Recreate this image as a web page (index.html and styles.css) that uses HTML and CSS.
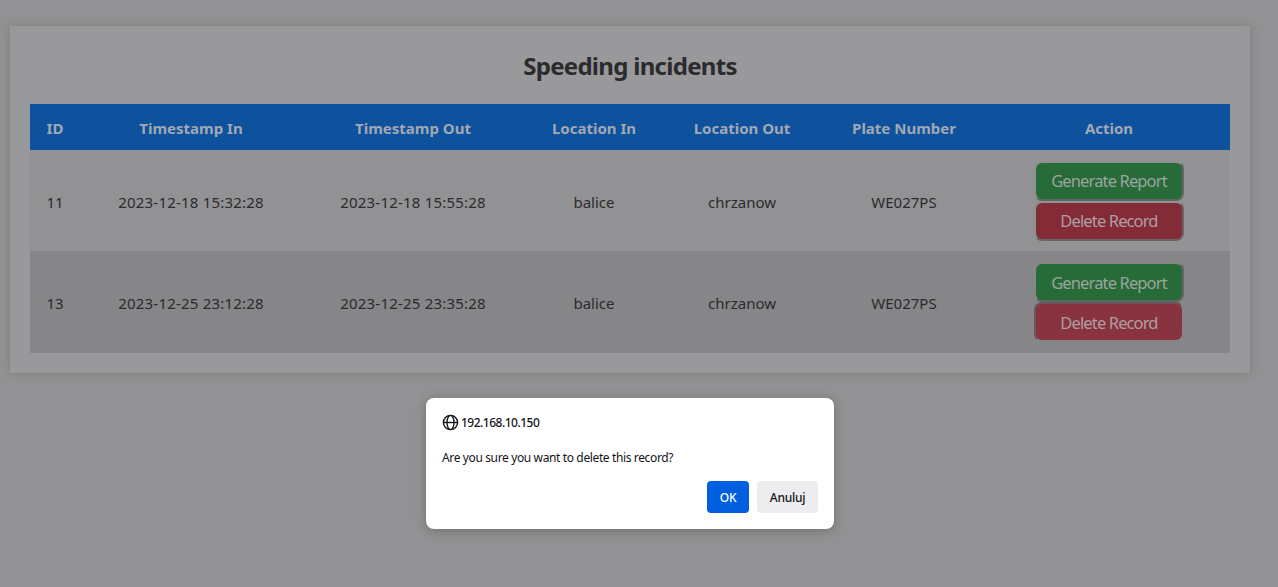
FILE: index.html
```html
<!DOCTYPE html>
<html lang="en">
<head>
<meta charset="utf-8">
<title>Speeding incidents</title>
<link rel="stylesheet" href="styles.css">
</head>
<body>
<main class="card">
  <h2 class="title">Speeding incidents</h2>
  <table class="incidents">
    <colgroup><col class="c-id"><col class="c-time"><col class="c-time"><col class="c-in"><col class="c-out"><col class="c-plate"><col></colgroup>
    <thead>
      <tr><th>ID</th><th>Timestamp In</th><th>Timestamp Out</th><th>Location In</th><th>Location Out</th><th>Plate Number</th><th>Action</th></tr>
    </thead>
    <tbody>
      <tr>
        <td>11</td><td class="time">2023-12-18 15:32:28</td><td class="time">2023-12-18 15:55:28</td><td>balice</td><td>chrzanow</td><td>WE027PS</td>
        <td><div class="actions"><button class="btn report">Generate Report</button><button class="btn delete">Delete Record</button></div></td>
      </tr>
      <tr>
        <td>13</td><td class="time">2023-12-25 23:12:28</td><td class="time">2023-12-25 23:35:28</td><td>balice</td><td>chrzanow</td><td>WE027PS</td>
        <td><div class="actions"><button class="btn report">Generate Report</button><button class="btn delete pressed">Delete Record</button></div></td>
      </tr>
    </tbody>
  </table>
</main>
<div class="dialog" role="dialog">
  <div class="origin">
    <svg class="globe" viewBox="0 0 16 16" fill="none" stroke="#15141a" stroke-width="1.3"><circle cx="8" cy="8" r="6.7"/><ellipse cx="8" cy="8" rx="3.3" ry="6.7"/><path d="M1.3 8h13.4"/></svg>
    <span class="host">192.168.10.150</span>
  </div>
  <p class="message">Are you sure you want to delete this record?</p>
  <div class="choices"><button class="choice ok">OK</button><button class="choice cancel">Anuluj</button></div>
</div>
</body>
</html>
```
FILE: styles.css
```css
* { box-sizing: border-box; }
body {
  margin: 0;
  height: 587px;
  padding: 26px 28px 0 10px;
  overflow: hidden;
  background: #929294;
  color: #2b2b2d;
  font-family: "Noto Sans", "Open Sans", sans-serif;
}
.card {
  height: 347px;
  padding: 20px;
  background: #99999b;
  box-shadow: 0 0 10px rgba(0, 0, 0, .14);
}
.title {
  height: 58px;
  margin: 0;
  font-size: 24px;
  line-height: 40px;
  letter-spacing: -.7px;
  text-align: center;
}
.incidents {
  width: 1200px;
  table-layout: fixed;
  border-collapse: collapse;
  font-size: 15px;
  text-align: center;
}
.c-id { width: 50px; }
.c-time { width: 222px; }
.c-in { width: 140px; }
.c-out { width: 156px; }
.c-plate { width: 168px; }
th {
  height: 46px;
  padding: 1px 0 0;
  background: #0e519d;
  color: #a1a8b2;
  white-space: nowrap;
}
td { height: 101px; padding: 2px 0 0; }
.time { letter-spacing: .2px; }
tbody tr { background: #929294; }
tbody tr:nth-child(2) { background: #868688; }
tbody tr:nth-child(2) td { height: 102px; }
tbody tr:nth-child(2) td:last-child { padding: 0; }
tbody td:last-child { padding: 0; }
.actions {
  display: flex;
  flex-direction: column;
  align-items: center;
}
.btn {
  width: 150px;
  height: 40px;
  padding: 0;
  border: 2px solid;
  border-radius: 8px;
  font: 16.5px "Noto Sans", sans-serif;
  letter-spacing: -.87px;
  color: #9ba49e;
}
.report { background: #266b38; border-color: #8f9091 #626664 #626664 #8f9091; }
.delete { background: #842b38; border-color: #8f9091 #6c6264 #6c6264 #8f9091; color: #b09da1; }
tbody tr:nth-child(2) .report { border-top-color: #868688; border-left-color: #868688; }
tbody tr:nth-child(2) .pressed { background: #88333f; border-color: #67575b #868688 #868688 #67575b; }
.dialog {
  position: absolute;
  left: 426px;
  top: 398px;
  width: 408px;
  height: 131px;
  padding: 16px;
  border-radius: 8px;
  background: #fff;
  box-shadow: 0 2px 12px rgba(0, 0, 0, .23);
  color: #15141a;
  font-size: 12px;
}
.origin { display: flex; align-items: center; gap: 2px; height: 17px; }
.globe { width: 17px; height: 17px; }
.host { letter-spacing: -.5px; font-weight: 500; }
.message { height: 50px; margin: 0; padding-top: 18px; line-height: 17px; letter-spacing: -.37px; }
.choices { display: flex; justify-content: flex-end; gap: 8px; }
.choice {
  height: 32px;
  padding: 0;
  border: 0;
  border-radius: 4px;
  font: 500 12px "Noto Sans", sans-serif;
  letter-spacing: -.25px;
}
.ok { width: 42px; background: #0060df; color: #fff; }
.cancel { width: 61px; background: #ededf0; color: #15141a; }
```
